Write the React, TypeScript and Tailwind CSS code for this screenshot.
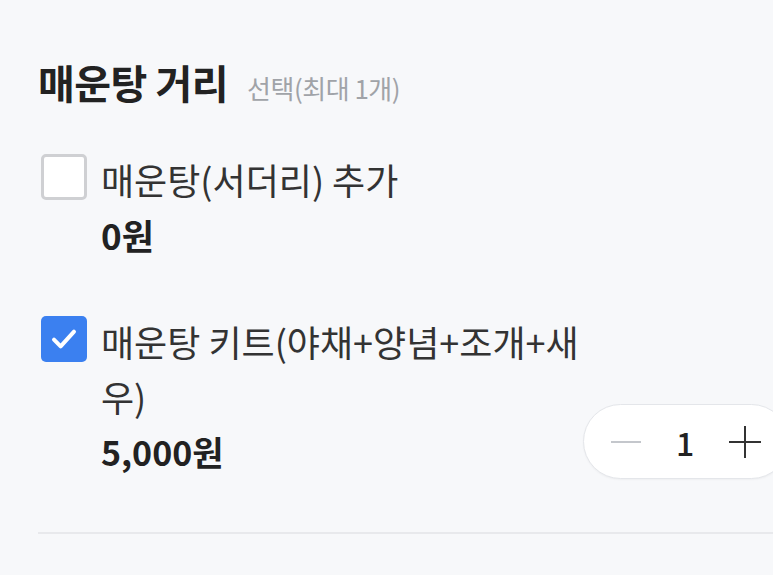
import React from "react";

const FONT = { fontFamily: '"Noto Sans CJK KR", "Noto Sans", sans-serif' };

function Checkbox({ checked }: { checked: boolean }) {
  if (checked) {
    return (
      <div className="flex h-[46px] w-[46px] flex-none items-center justify-center rounded-[5px] bg-[#3b80f0]">
        <svg width="32" height="32" viewBox="0 0 24 24" fill="none">
          <path d="M4.5 12.5l5 5 10-11" stroke="white" strokeWidth="3" strokeLinecap="round" strokeLinejoin="round" />
        </svg>
      </div>
    );
  }
  return <div className="h-[46px] w-[46px] flex-none rounded-[5px] border-[3px] border-[#cfd0d3] bg-white" />;
}

function Stepper({ value }: { value: number }) {
  return (
    <div className="flex h-[75px] w-[206px] flex-none items-center justify-between rounded-full border border-[#e4e6ea] bg-white px-[26px] shadow-[0_1px_2px_rgba(0,0,0,0.04)]">
      <svg width="32" height="32" viewBox="0 0 32 32">
        <path d="M1 16h30" stroke="#c4c7cc" strokeWidth="2" />
      </svg>
      <span className="text-[32px] font-medium leading-none text-[#222]">{value}</span>
      <svg width="34" height="34" viewBox="0 0 34 34">
        <path d="M1 17h32M17 1v32" stroke="#333" strokeWidth="2" />
      </svg>
    </div>
  );
}

export default function App() {
  return (
    <div className="min-h-[575px] w-[773px] overflow-hidden bg-[#f7f8fa]" style={FONT}>
      <div className="w-[810px] pl-[38px] pt-[58px]">
        <div className="flex items-baseline gap-[19px]">
          <h2 className="text-[40px] font-bold leading-[48px] tracking-[-0.5px] text-[#222]">매운탕 거리</h2>
          <span className="text-[26px] leading-[48px] tracking-[-0.5px] text-[#a0a3a8]">선택(최대 1개)</span>
        </div>

        <div className="mt-[40px] flex gap-[14px]">
          <div className="pt-[2px] pl-[3px]">
            <Checkbox checked={false} />
          </div>
          <div className="w-[480px] leading-[55px]">
            <div className="text-[36px] text-[#333]">매운탕(서더리) 추가</div>
            <div className="text-[35px] font-bold text-[#222]">0원</div>
          </div>
        </div>

        <div className="mt-[52px] flex items-end">
          <div className="flex gap-[14px]">
            <div className="pt-[2px] pl-[3px]">
              <Checkbox checked />
            </div>
            <div className="w-[480px] leading-[55px]">
              <div className="text-[36px] text-[#333]">매운탕 키트(야채+양념+조개+새우)</div>
              <div className="text-[34px] font-bold text-[#222]">5,000원</div>
            </div>
          </div>
          <div className="ml-[2px]">
            <Stepper value={1} />
          </div>
        </div>

        <div className="mt-[53px] h-[2px] bg-[#e8e9ec]" />
      </div>
    </div>
  );
}
